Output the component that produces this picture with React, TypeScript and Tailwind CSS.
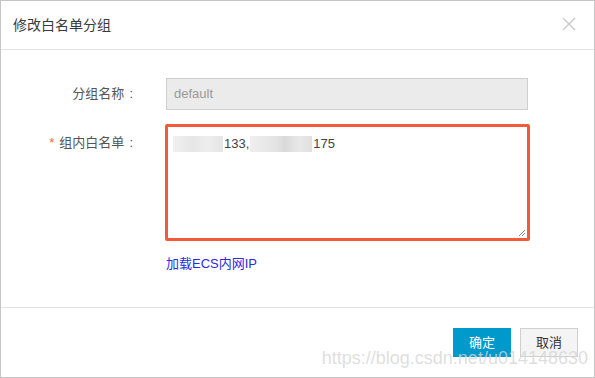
import React from "react";

export default function App() {
  const font = { fontFamily: '"Liberation Sans", "Noto Sans CJK SC", sans-serif' };
  return (
    <div
      className="relative w-[595px] h-[378px] bg-white border border-[#c6c6c6] flex flex-col text-[#333] overflow-hidden"
      style={font}
    >
      {/* header */}
      <div className="h-[49px] flex items-center justify-between pl-[12px] pr-[18px] border-b border-[#e3e3e3] shrink-0">
        <span className="text-[14px] text-[#3a3a3a] mt-[1px]">修改白名单分组</span>
        <svg width="14" height="14" viewBox="0 0 14 14" className="mt-[-2px]">
          <path d="M1 1 L13 13 M13 1 L1 13" stroke="#c8c8c8" strokeWidth="1.3" />
        </svg>
      </div>

      {/* body */}
      <div className="flex-1 flex flex-col pt-[28px]">
        <div className="flex items-center h-[32px]">
          <div className="w-[132px] text-right text-[13px] text-[#555]">
            分组名称<span className="ml-[5px]">:</span>
          </div>
          <div className="ml-[33px] w-[362px] h-[32px] bg-[#ebebeb] border border-[#cfcfcf] flex items-center pl-[7px] text-[13px] text-[#9a9a9a]">
            default
          </div>
        </div>

        <div className="flex items-start mt-[14px]">
          <div className="w-[132px] text-right text-[13px] text-[#555] mt-[9px]">
            <span className="text-[#f26a2e] mr-[5px]">*</span>组内白名单<span className="ml-[5px]">:</span>
          </div>
          <div className="ml-[32px] w-[365px] h-[117px] border-[3px] border-[#f25a3a] rounded-[2px] bg-white relative">
            <div className="flex items-center pl-[5px] pt-[7px] text-[13px] text-[#444]">
              <span className="w-[50px] h-[16px] bg-[linear-gradient(90deg,#f0f0f0,#e6e6e6_40%,#eeeeee_70%,#e4e4e4)]" />
              <span className="ml-[1px]">133,</span>
              <span className="ml-[1px] w-[62px] h-[16px] bg-[linear-gradient(90deg,#efefef,#e2e2e2_45%,#d9d9d9_55%,#e8e8e8_80%,#e0e0e0)]" />
              <span className="ml-[1px]">175</span>
            </div>
            <svg width="8" height="8" viewBox="0 0 8 8" className="absolute right-[1px] bottom-[1px]">
              <path d="M1 7 L7 1 M4 7 L7 4" stroke="#666" strokeWidth="0.8" />
            </svg>
          </div>
        </div>

        <div className="ml-[165px] mt-[13px] text-[13px] text-[#2a2ae6]">加载ECS内网IP</div>
      </div>

      {/* footer */}
      <div className="h-[70px] border-t border-[#e3e3e3] flex justify-end items-start pt-[20px] pr-[16px] gap-[9px] shrink-0">
        <button className="w-[58px] h-[29px] bg-[#0099cc] text-white text-[13px]">确定</button>
        <button className="w-[58px] h-[29px] bg-[#f4f4f4] border border-[#d0d0d0] text-[#333] text-[13px]">取消</button>
      </div>

      {/* watermark */}
      <div className="absolute right-[6px] bottom-[10px] text-[18px] text-[#d6d6d6]/80 leading-none pointer-events-none">
        https://blog.csdn.net/u014148630
      </div>
    </div>
  );
}
